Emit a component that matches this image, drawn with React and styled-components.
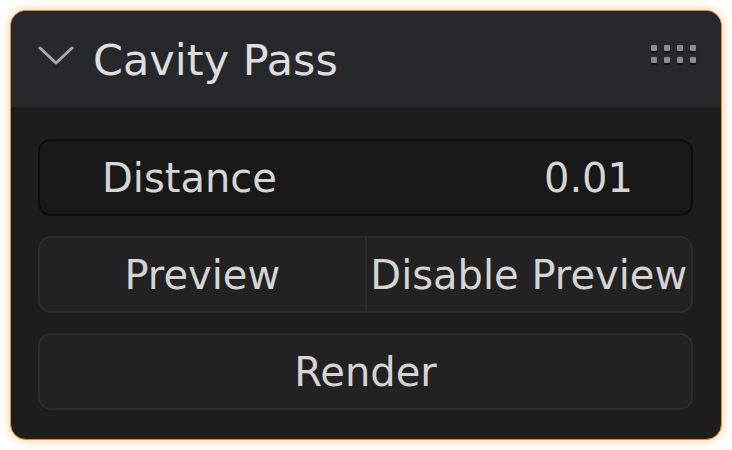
import React from "react";
import styled, { createGlobalStyle } from "styled-components";

const Global = createGlobalStyle`
  html, body {
    margin: 0;
    padding: 0;
    background: #ffffff;
  }
  body {
    font-family: "DejaVu Sans", "Liberation Sans", sans-serif;
  }
`;

const App = () => {
  return (
    <>
      <Global />
      <Page>
        <Panel>
          <Header>
            <Chevron viewBox="0 0 36 22">
              <path d="M2 3 L18 18 L34 3" />
            </Chevron>
            <Title>Cavity Pass</Title>
            <Grip>
              {Array.from({ length: 8 }).map((_, i) => (
                <Dot key={i} />
              ))}
            </Grip>
          </Header>

          <Body>
            <Field>
              <span>Distance</span>
              <span>0.01</span>
            </Field>
            <ButtonRow>
              <Button>Preview</Button>
              <Button $joined>Disable Preview</Button>
            </ButtonRow>
            <Button $single>Render</Button>
          </Body>
        </Panel>
      </Page>
    </>
  );
};

export default App;

const Page = styled.div`
  padding: 10px;
`;

const Panel = styled.div`
  width: 712px;
  height: 430px;
  box-sizing: border-box;
  border: 1px solid #e8892a;
  border-radius: 16px;
  overflow: hidden;
  background: #1d1d1d;
  box-shadow: 0 0 8px 2px rgba(255, 150, 50, 0.35);
  display: flex;
  flex-direction: column;
`;

const Header = styled.div`
  height: 96px;
  flex-shrink: 0;
  background: #27282c;
  display: flex;
  align-items: center;
  padding: 0 25px 0 27px;
`;

const Chevron = styled.svg`
  width: 36px;
  height: 22px;
  margin-top: -6px;
  fill: none;
  stroke: #a9a9a9;
  stroke-width: 3;
  stroke-linecap: round;
  stroke-linejoin: round;
`;

const Title = styled.div`
  margin-left: 19px;
  font-size: 43px;
  color: #dedede;
  margin-top: 2px;
`;

const Grip = styled.div`
  margin-left: auto;
  margin-top: -10px;
  display: grid;
  grid-template-columns: repeat(4, 6px);
  grid-auto-rows: 6px;
  column-gap: 7px;
  row-gap: 6px;
`;

const Dot = styled.div`
  background: #8c8c8c;
  border-radius: 1px;
  box-shadow: 0 2px 1px rgba(0, 0, 0, 0.6);
`;

const Body = styled.div`
  flex: 1;
  display: flex;
  flex-direction: column;
  gap: 20px;
  padding: 32px 28px 0 27px;
`;

const Field = styled.div`
  height: 77px;
  box-sizing: border-box;
  border: 2px solid #0c0c0c;
  border-radius: 13px;
  background: #181818;
  display: flex;
  align-items: center;
  justify-content: space-between;
  padding: 0 58px 0 62px;
  font-size: 40px;
  color: #d4d4d4;
`;

const ButtonRow = styled.div`
  display: flex;
  height: 77px;
  flex-shrink: 0;
`;

const Button = styled.div`
  flex: ${(p) => (p.$single ? "0 0 77px" : "1")};
  height: 77px;
  box-sizing: border-box;
  border: 2px solid #2c2c2c;
  background: #222222;
  display: flex;
  align-items: center;
  justify-content: center;
  font-size: 40px;
  color: #d4d4d4;
  white-space: nowrap;
  border-radius: ${(p) =>
    p.$single ? "13px" : p.$joined ? "0 13px 13px 0" : "13px 0 0 13px"};
  ${(p) => p.$joined && "border-left-width: 1px;"}
  ${(p) => !p.$single && !p.$joined && "border-right-width: 1px;"}
`;
